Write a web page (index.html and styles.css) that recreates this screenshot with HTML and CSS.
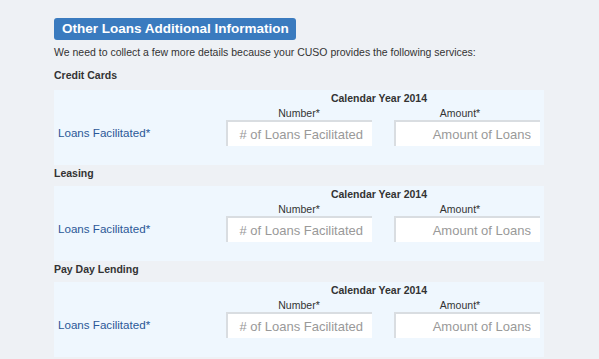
FILE: index.html
```html
<!DOCTYPE html>
<html lang="en">
<head>
  <meta charset="UTF-8" />
  <meta name="viewport" content="width=device-width, initial-scale=1" />
  <title>Other Loans Additional Information</title>
  <link rel="stylesheet" href="styles.css">
</head>
<body>
  <div class="form-section">
    <h2 class="section-title">Other Loans Additional Information</h2>
    <p class="intro">We need to collect a few more details because your CUSO provides the following services:</p>

    <h3 class="service-name first">Credit Cards</h3>
    <div class="service-panel">
      <div class="year-head">Calendar Year 2014</div>
      <label class="row-label" for="ccNumber">Loans Facilitated*</label>
      <div class="field">
        <span class="field-label">Number*</span>
        <input type="text" id="ccNumber" placeholder="# of Loans Facilitated" />
      </div>
      <div class="field amount">
        <span class="field-label">Amount*</span>
        <input type="text" id="ccAmount" placeholder="Amount of Loans" />
      </div>
    </div>

    <h3 class="service-name">Leasing</h3>
    <div class="service-panel">
      <div class="year-head">Calendar Year 2014</div>
      <label class="row-label" for="leNumber">Loans Facilitated*</label>
      <div class="field">
        <span class="field-label">Number*</span>
        <input type="text" id="leNumber" placeholder="# of Loans Facilitated" />
      </div>
      <div class="field amount">
        <span class="field-label">Amount*</span>
        <input type="text" id="leAmount" placeholder="Amount of Loans" />
      </div>
    </div>

    <h3 class="service-name">Pay Day Lending</h3>
    <div class="service-panel">
      <div class="year-head">Calendar Year 2014</div>
      <label class="row-label" for="pdNumber">Loans Facilitated*</label>
      <div class="field">
        <span class="field-label">Number*</span>
        <input type="text" id="pdNumber" placeholder="# of Loans Facilitated" />
      </div>
      <div class="field amount">
        <span class="field-label">Amount*</span>
        <input type="text" id="pdAmount" placeholder="Amount of Loans" />
      </div>
    </div>
  </div>
</body>
</html>
```

FILE: styles.css
```css
body {
  font-family: "Liberation Sans", Arial, sans-serif;
  background: #eef1f5;
  color: #333;
  margin: 0;
}
.form-section {
  width: 490px;
  padding: 18px 0 0 54px;
}
.section-title {
  display: inline-block;
  margin: 0;
  padding: 2px 7px 3px 8px;
  background: #3a7bbf;
  color: white;
  font-size: 13.5px;
  line-height: 17px;
  border-radius: 3px;
}
.intro {
  margin: 5px 0 0;
  font-size: 10.5px;
  line-height: 14px;
}
.service-name {
  margin: 0;
  font-size: 10.5px;
  line-height: 14px;
  padding: 1px 0 6px;
}
.service-name.first {
  margin-top: 8px;
  padding-bottom: 8px;
}
.service-panel {
  display: grid;
  grid-template-columns: 150px 146px 146px;
  column-gap: 22px;
  align-items: end;
  background: #eff7fe;
  padding: 1px 0 19px;
}
.year-head {
  grid-column: 2 / 4;
  text-align: center;
  font-size: 10.5px;
  font-weight: bold;
  line-height: 14px;
  padding-right: 8px;
}
.row-label {
  align-self: end;
  padding: 0 0 6px 4px;
  color: #2b5797;
  font-size: 11.6px;
  line-height: 15px;
}
.field {
  display: flex;
  flex-direction: column;
}
.field-label {
  text-align: center;
  font-size: 10.5px;
  line-height: 14px;
  margin-top: 1px;
}
.amount .field-label {
  padding-right: 14px;
}
.field input {
  width: 100%;
  height: 26px;
  box-sizing: border-box;
  border: none;
  border-top: 2px solid #d9dde1;
  border-left: 2px solid #d9dde1;
  background: white;
  padding: 0 9px;
  text-align: right;
  font-family: "Liberation Sans", Arial, sans-serif;
  font-size: 13px;
}
.field input::placeholder {
  color: #999;
}
```
